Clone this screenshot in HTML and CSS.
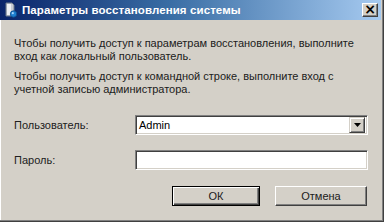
FILE: index.html
```html
<!DOCTYPE html>
<html lang="ru">
<head>
<meta charset="utf-8">
<title>Параметры восстановления системы</title>
<link rel="stylesheet" href="styles.css">
</head>
<body>
<div class="window">
  <div class="titlebar">
    <svg class="app-icon" width="16" height="16" viewBox="0 0 16 16">
      <path d="M3 1 L9 1 L11 3 L11 14 L3 14 Z" fill="#c8ccd4" stroke="#6f7a8a" stroke-width="1"/>
      <path d="M4 2 L8 2 L8 13 L4 13 Z" fill="#eef0f4"/>
      <circle cx="10.5" cy="12" r="3.2" fill="#1e7fd0" stroke="#0d4c8c" stroke-width="0.8"/>
      <circle cx="9.8" cy="11.2" r="1.1" fill="#9fd4ff"/>
    </svg>
    <span class="title">Параметры восстановления системы</span>
    <div class="close-btn"><span>×</span></div>
  </div>
  <div class="content">
    <p class="para">Чтобы получить доступ к параметрам восстановления, выполните вход как локальный пользователь.</p>
    <p class="para">Чтобы получить доступ к командной строке, выполните вход с учетной записью администратора.</p>
    <div class="form">
      <label class="label">Пользователь:</label>
      <div class="field combo">
        <span class="value">Admin</span>
        <div class="drop-btn">
          <svg width="7" height="4" viewBox="0 0 7 4"><path d="M0 0 H7 L3.5 4 Z" fill="#000"/></svg>
        </div>
      </div>
      <label class="label">Пароль:</label>
      <div class="field"></div>
    </div>
    <div class="buttons">
      <div class="btn default"><span>ОК</span></div>
      <div class="btn cancel"><span>Отмена</span></div>
    </div>
  </div>
</div>
</body>
</html>
```
FILE: styles.css
```css
* { box-sizing: border-box; }
html, body { margin: 0; padding: 0; }
body {
  width: 384px;
  height: 222px;
  overflow: hidden;
  background: #d4d0c8;
  font-family: "Liberation Sans", Arial, sans-serif;
  font-size: 11px;
  color: #000;
}
.window {
  width: 384px;
  height: 222px;
  display: flex;
  flex-direction: column;
  background: #d4d0c8;
  border-right: 1px solid #404040;
  border-bottom: 1px solid #404040;
  box-shadow: inset -1px -1px 0 #808080, inset 1px 0 0 #ffffff;
  padding-right: 2px;
}
.titlebar {
  height: 20px;
  flex: none;
  display: flex;
  align-items: center;
  padding-left: 3px;
  padding-right: 3px;
  background: linear-gradient(to right, #0a246a 0%, #3a6ea5 45%, #a6caf0 100%);
}
.app-icon { flex: none; margin-right: 3px; }
.title {
  color: #fff;
  font-weight: bold;
  font-size: 11.5px;
  letter-spacing: 0.1px;
  flex: 1;
  white-space: nowrap;
}
.close-btn {
  width: 16px;
  height: 14px;
  background: #d4d0c8;
  border-top: 1px solid #fff;
  border-left: 1px solid #fff;
  border-right: 1px solid #404040;
  border-bottom: 1px solid #404040;
  box-shadow: inset -1px -1px 0 #808080;
  display: flex;
  align-items: center;
  justify-content: center;
  font-family: "DejaVu Sans", sans-serif;
  font-weight: bold;
  font-size: 14px;
  line-height: 1;
}
.close-btn span { margin-top: -2px; }
.content {
  flex: 1;
  padding: 17px 14px 0 14px;
  display: flex;
  flex-direction: column;
}
.para {
  margin: 0 0 7px 0;
  line-height: 13px;
  color: #202020;
  width: 350px;
}
.form {
  margin-top: 12px;
  display: grid;
  grid-template-columns: 121px 233px;
  grid-template-rows: 20px 20px;
  row-gap: 15px;
  align-items: center;
}
.label { color: #202020; }
.field {
  height: 20px;
  background: #fff;
  border-top: 1px solid #808080;
  border-left: 1px solid #808080;
  border-right: 1px solid #fff;
  border-bottom: 1px solid #fff;
  box-shadow: inset 1px 1px 0 #404040, inset -1px -1px 0 #d4d0c8;
}
.combo {
  display: flex;
  align-items: center;
  padding: 2px 2px 2px 3px;
}
.value { flex: 1; }
.drop-btn {
  width: 16px;
  height: 16px;
  background: #d4d0c8;
  border-top: 1px solid #d4d0c8;
  border-left: 1px solid #d4d0c8;
  border-right: 1px solid #404040;
  border-bottom: 1px solid #404040;
  box-shadow: inset 1px 1px 0 #fff, inset -1px -1px 0 #808080;
  display: flex;
  align-items: center;
  justify-content: center;
}
.buttons {
  margin-top: 16px;
  display: flex;
  gap: 15px;
  padding-left: 158px;
}
.btn {
  height: 20px;
  background: #d4d0c8;
  border-top: 1px solid #fff;
  border-left: 1px solid #fff;
  border-right: 1px solid #404040;
  border-bottom: 1px solid #404040;
  box-shadow: inset -1px -1px 0 #808080;
  display: flex;
  align-items: center;
  justify-content: center;
  color: #202020;
}
.btn.default {
  width: 89px;
  border: 1px solid #000;
  box-shadow: inset 1px 1px 0 #fff, inset -1px -1px 0 #404040, inset -2px -2px 0 #808080;
}
.btn.cancel { width: 93px; }
```
